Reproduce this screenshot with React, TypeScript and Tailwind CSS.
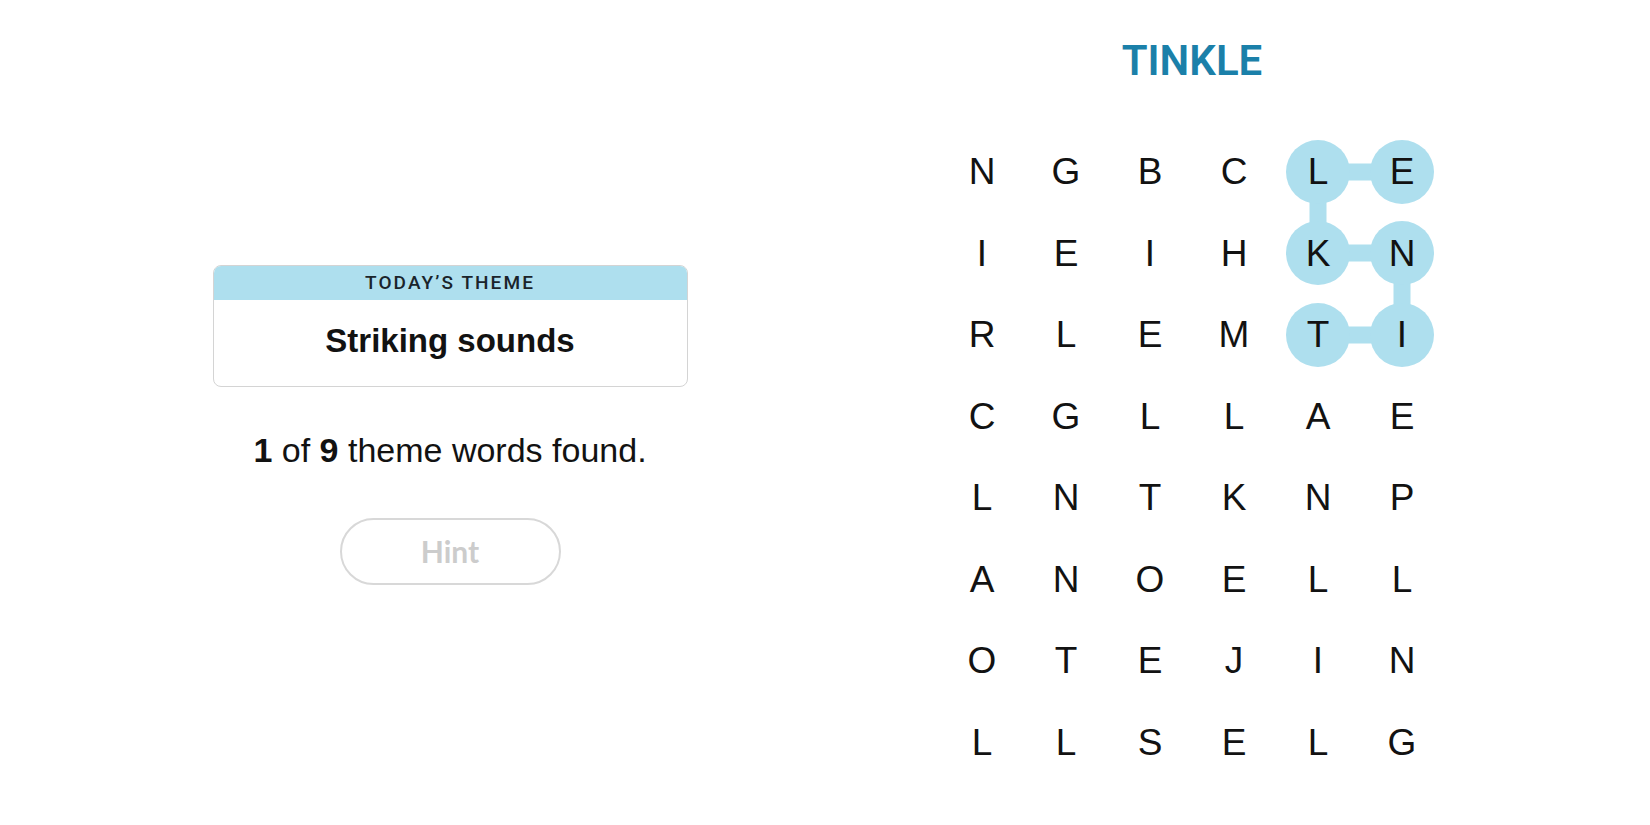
const grid = [
  "NGBCLE",
  "IEIHKN",
  "RLEMTI",
  "CGLLAE",
  "LNTKNP",
  "ANOELL",
  "OTEJIN",
  "LLSELG",
];

// found word TINKLE: cells and links (right / down only)
const found = new Set(["0-4", "0-5", "1-4", "1-5", "2-4", "2-5"]);
const linkRight = new Set(["0-4", "1-4", "2-4"]);
const linkDown = new Set(["0-4", "1-5"]);

function Cell({ letter, r, c }: { letter: string; r: number; c: number }) {
  const key = `${r}-${c}`;
  const hit = found.has(key);
  return (
    <div className="relative flex h-[81.5px] w-[84px] items-center justify-center">
      {linkRight.has(key) && (
        <div className="absolute left-1/2 top-1/2 z-0 h-[17px] w-[84px] -translate-y-1/2 bg-[#aedfee]" />
      )}
      {linkDown.has(key) && (
        <div className="absolute left-1/2 top-1/2 z-0 h-[81.5px] w-[17px] -translate-x-1/2 bg-[#aedfee]" />
      )}
      {hit && (
        <div className="absolute left-1/2 top-1/2 z-0 h-[64px] w-[64px] -translate-x-1/2 -translate-y-1/2 rounded-full bg-[#aedfee]" />
      )}
      <span className="relative z-10 text-[37px] leading-none text-[#121212]">
        {letter}
      </span>
    </div>
  );
}

export default function App() {
  return (
    <div className="flex h-[825px] w-[1650px] bg-white font-['Liberation_Sans',Arial,sans-serif]">
      <div className="flex w-[900px] flex-col items-center pt-[265px]">
        <div className="w-[475px] overflow-hidden rounded-lg border border-[#d4d4d4]">
          <div className="flex h-[34px] items-center justify-center bg-[#aedfee] font-['Roboto',sans-serif] text-[19px] font-medium tracking-[0.11em] text-[#1a242b]">
            TODAY’S THEME
          </div>
          <div className="flex h-[86px] items-center justify-center pb-[4px] text-[33px] font-bold text-[#121212]">
            Striking sounds
          </div>
        </div>

        <p className="mt-[46px] text-[34px] leading-none text-[#121212]">
          <b>1</b> of <b>9</b> theme words found.
        </p>

        <button className="mt-[51px] h-[67px] w-[221px] rounded-full border-2 border-[#d8d8d8] font-['Lato',sans-serif] text-[30px] font-bold text-[#cccccc]">
          Hint
        </button>
      </div>

      <div className="flex flex-col items-center pl-[40px] pt-[40px]">
        <h1 className="w-[504px] text-center font-['Roboto',sans-serif] text-[42px] font-semibold leading-none text-[#1b80a9]">
          TINKLE
        </h1>
        <div className="mt-[49px] grid grid-cols-6">
          {grid.map((row, r) =>
            row.split("").map((ch, c) => (
              <Cell key={`${r}-${c}`} letter={ch} r={r} c={c} />
            ))
          )}
        </div>
      </div>
    </div>
  );
}
